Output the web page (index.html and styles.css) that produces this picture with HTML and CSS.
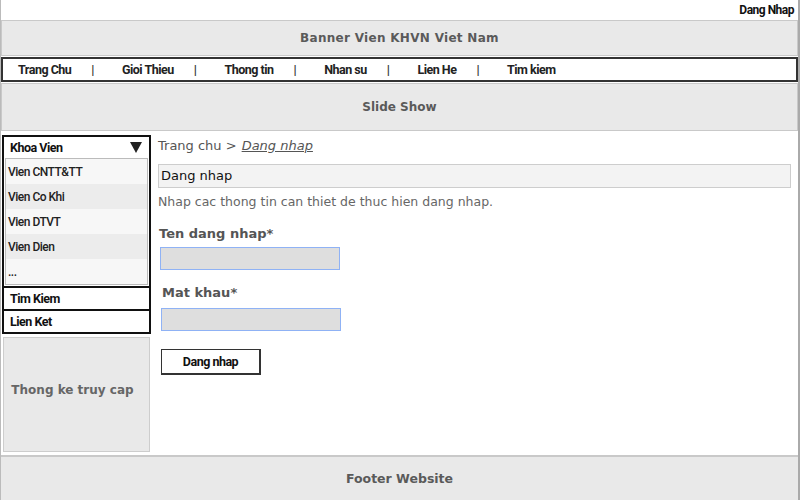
FILE: index.html
```html
<!DOCTYPE html>
<html>
<head>
<meta charset="utf-8">
<link rel="stylesheet" href="styles.css">
</head>
<body>
<div class="page">
  <div class="topbar"><span class="login-link">Dang Nhap</span></div>
  <div class="banner">Banner Vien KHVN Viet Nam</div>
  <nav class="nav">
    <span class="nav-item">Trang Chu</span><span class="sep">|</span>
    <span class="nav-item">Gioi Thieu</span><span class="sep">|</span>
    <span class="nav-item">Thong tin</span><span class="sep">|</span>
    <span class="nav-item">Nhan su</span><span class="sep">|</span>
    <span class="nav-item">Lien He</span><span class="sep">|</span>
    <span class="nav-item">Tim kiem</span>
  </nav>
  <div class="slideshow">Slide Show</div>
  <div class="content">
    <aside class="sidebar">
      <div class="menu">
        <div class="menu-head"><span>Khoa Vien</span><span class="tri"></span></div>
        <ul class="menu-list">
          <li class="light">Vien CNTT&amp;TT</li>
          <li class="dark">Vien Co Khi</li>
          <li class="light">Vien DTVT</li>
          <li class="dark">Vien Dien</li>
          <li class="light">...</li>
        </ul>
        <div class="menu-row">Tim Kiem</div>
        <div class="menu-row last">Lien Ket</div>
      </div>
      <div class="stats">Thong ke truy cap</div>
    </aside>
    <main class="main">
      <div class="crumb">Trang chu &gt; <a class="crumb-link">Dang nhap</a></div>
      <div class="section-head">Dang nhap</div>
      <p class="desc">Nhap cac thong tin can thiet de thuc hien dang nhap.</p>
      <div class="field">
        <label class="label">Ten dang nhap*</label>
        <div class="input"></div>
      </div>
      <div class="field second">
        <label class="label">Mat khau*</label>
        <div class="input"></div>
      </div>
      <div class="btn">Dang nhap</div>
    </main>
  </div>
  <footer class="footer">Footer Website</footer>
</div>
</body>
</html>
```
FILE: styles.css
```css
* { box-sizing: border-box; }
html, body { margin: 0; padding: 0; background: #fff; }
.page {
  width: 800px;
  height: 500px;
  display: flex;
  flex-direction: column;
  border-left: 1px solid #bbb;
  border-right: 2px solid #aaa;
  font-family: "DejaVu Sans", sans-serif;
  overflow: hidden;
}
.login-link, .nav, .menu, .btn {
  font-family: Roboto, "Liberation Sans", sans-serif;
  font-weight: 700;
  letter-spacing: -0.5px;
}
.topbar {
  height: 20px;
  display: flex;
  justify-content: flex-end;
  align-items: center;
  padding-right: 4px;
}
.login-link {
  font-size: 12px;
  color: #111;
}
.banner {
  height: 36px;
  background: #e9e9e9;
  border: 1px solid #c9c9c9;
  display: flex;
  align-items: center;
  justify-content: center;
  font-size: 12px;
  font-weight: bold;
  color: #5a5a5a;
  letter-spacing: 0.3px;
}
.nav {
  margin-top: 1px;
  height: 25px;
  border: 2px solid #333;
  display: flex;
  align-items: center;
  padding-left: 15px;
  font-size: 12.5px;
  color: #222;
}
.sep {
  margin: 0 28px 0 20px;
  color: #333;
}
.slideshow {
  margin-top: 1px;
  height: 48px;
  background: #e9e9e9;
  border: 1px solid #c9c9c9;
  display: flex;
  align-items: center;
  justify-content: center;
  font-size: 12px;
  font-weight: bold;
  color: #5a5a5a;
}
.content {
  flex: 1;
  display: flex;
  padding-top: 4px;
}
.sidebar {
  width: 150px;
  display: flex;
  flex-direction: column;
  padding-left: 1px;
}
.menu {
  border: 2px solid #111;
  display: flex;
  flex-direction: column;
  font-size: 12.5px;
  color: #111;
}
.menu-head {
  height: 20px;
  display: flex;
  align-items: center;
  justify-content: space-between;
  padding: 0 7px 0 6px;
}
.tri {
  width: 0; height: 0;
  border-left: 6px solid transparent;
  border-right: 6px solid transparent;
  border-top: 11px solid #222;
}
.menu-list {
  list-style: none;
  margin: 1px;
  padding: 0;
  border: 1px solid #bbb;
}
.menu-list li {
  height: 25px;
  display: flex;
  align-items: center;
  padding-left: 2px;
  font-size: 12px;
  font-weight: 500;
  color: #222;
}
.menu-list li.light { background: #f7f7f7; }
.menu-list li.dark { background: #ececec; }
.menu-row {
  height: 23px;
  border-top: 2px solid #111;
  display: flex;
  align-items: center;
  padding-left: 6px;
}
.stats {
  margin: 3px 1px 0 1px;
  height: 115px;
  padding: 0 8px 10px 0;
  background: #e9e9e9;
  border: 1px solid #cdcdcd;
  display: flex;
  align-items: center;
  justify-content: center;
  font-size: 12px;
  color: #666;
  font-weight: bold;
}
.main {
  flex: 1;
  padding: 0 7px 0 7px;
  display: flex;
  flex-direction: column;
  align-items: flex-start;
  color: #555;
}
.crumb {
  font-size: 13px;
  color: #555;
  height: 20px;
  display: flex;
  align-items: center;
}
.crumb-link {
  margin-left: 5px;
  font-style: italic;
  text-decoration: underline;
  color: #555;
}
.section-head {
  margin-top: 9px;
  width: 633px;
  height: 24px;
  background: #f3f3f3;
  border: 1px solid #cdcdcd;
  display: flex;
  align-items: center;
  padding: 0 0 1px 2px;
  font-size: 13px;
  color: #111;
}
.desc {
  margin: 6px 0 0 0;
  font-size: 12.5px;
  color: #666;
}
.field { display: flex; flex-direction: column; margin-top: 13px; }
.field.second { margin-top: 11px; padding-left: 3px; }
.label {
  font-size: 13px;
  font-weight: bold;
  color: #555;
  height: 22px;
  display: flex;
  align-items: center;
  margin-left: 1px;
}
.input {
  margin-top: 3px;
  width: 180px;
  height: 23px;
  background: #dedede;
  border: 1px solid #8fb2f5;
  margin-left: 2px;
}
.field.second .input { margin-left: 0; margin-top: 5px; }
.btn {
  margin: 18px 0 0 3px;
  width: 100px;
  height: 26px;
  border: 1px solid #333;
  border-right-width: 2px;
  border-bottom-width: 2px;
  background: #fff;
  display: flex;
  align-items: center;
  justify-content: center;
  font-size: 12.5px;
  color: #111;
}
.footer {
  height: 45px;
  background: #e9e9e9;
  border-top: 2px solid #c9c9c9;
  display: flex;
  align-items: center;
  justify-content: center;
  font-size: 12.5px;
  font-weight: bold;
  color: #5a5a5a;
}
```
